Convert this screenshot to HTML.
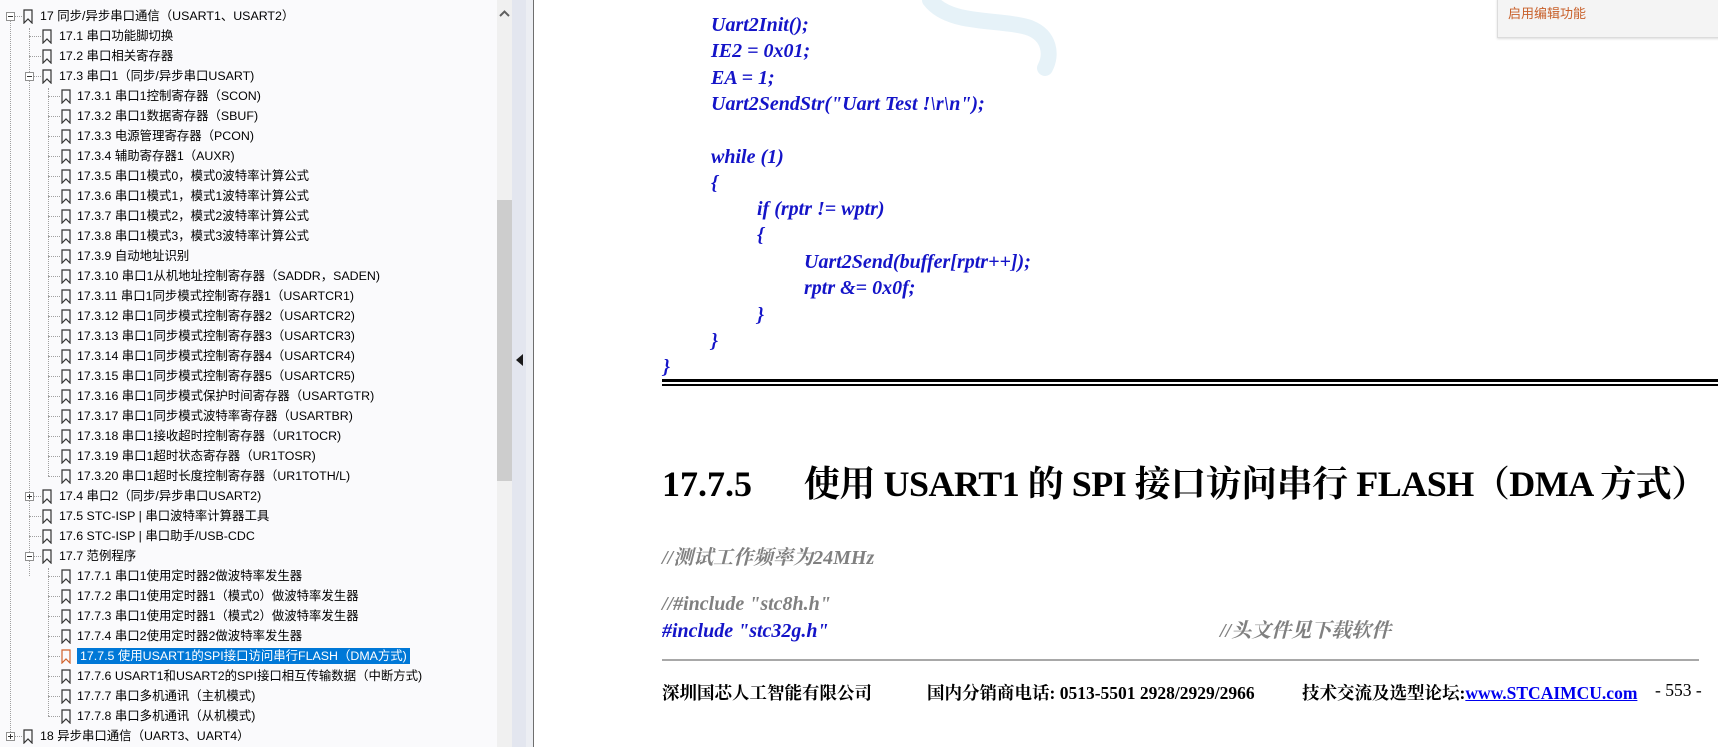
<!DOCTYPE html>
<html><head><meta charset="utf-8"><style>
*{margin:0;padding:0;box-sizing:border-box}
body{width:1718px;height:747px;overflow:hidden;background:#fff;position:relative;font-family:"Liberation Sans","Noto Sans CJK SC",sans-serif}
#left{position:absolute;left:0;top:0;width:497px;height:747px;background:#fafafc;overflow:hidden}
.r{position:absolute;height:20px;line-height:20px;font-size:12.4px;color:#000;white-space:nowrap}
.bm{position:absolute;width:10px;height:15px}
.vl{position:absolute;border-left:1px dotted #a0a0a0;width:0}
.hl{position:absolute;border-top:1px dotted #a0a0a0;height:0}
.ex{position:absolute;width:9px;height:9px;border:1px solid #919191;background:#fff}
.ex::before{content:"";position:absolute;left:1px;top:3px;width:5px;height:1px;background:#333}
.ex.p::after{content:"";position:absolute;left:3px;top:1px;width:1px;height:5px;background:#333}
.sel{background:#0078d7;color:#fff;padding:1px 3px}
#sb{position:absolute;left:497px;top:0;width:15px;height:747px;background:#f0f0f0}
#thumb{position:absolute;left:497px;top:200px;width:15px;height:281px;background:#cdcdcd}
#div{position:absolute;left:512px;top:0;width:14px;height:747px;background:#e3e6ef}
#div2{position:absolute;left:526px;top:0;width:7px;height:747px;background:#eceef3}
#div3{position:absolute;left:533px;top:0;width:1px;height:747px;background:#6e6e6e}
.code{position:absolute;font-family:"Liberation Serif","Noto Serif CJK SC",serif;font-weight:bold;font-style:italic;font-size:20px;color:#1414c8;white-space:pre;line-height:26.35px}
.cm{color:#808080}
.ft{position:absolute;top:680px;font-family:"Liberation Serif","Noto Serif CJK SC",serif;font-weight:bold;font-size:17.5px;color:#000;white-space:nowrap}
</style></head><body>
<div id="left">
<div class="vl" style="left:10px;top:21px;height:715px"></div>
<div class="vl" style="left:29px;top:28px;height:548px"></div>
<div class="vl" style="left:48px;top:88px;height:388px"></div>
<div class="vl" style="left:48px;top:568px;height:148px"></div>
</div>
<div id="sb"></div>
<svg style="position:absolute;left:499px;top:10px" width="11" height="8"><path d="M1 6 L5.5 1.5 L10 6" fill="none" stroke="#606060" stroke-width="2"/></svg>
<div id="thumb"></div>
<div id="div"></div><div id="div2"></div><div id="div3"></div>
<svg style="position:absolute;left:516px;top:354px" width="8" height="12"><path d="M7 0 L0 6 L7 12 Z" fill="#1a1a1a"/></svg>

<svg style="position:absolute;left:920px;top:0" width="140" height="80"><path d="M10 0 C30 26 80 18 110 28 C130 36 132 55 125 68" fill="none" stroke="#e6f2f8" stroke-width="16" stroke-linecap="round"/></svg>

<div style="position:absolute;left:1497px;top:-2px;width:225px;height:40px;background:#f4f4f4;border:1px solid #dcdcdc;box-shadow:0 1px 2px #ddd"></div>
<div style="position:absolute;left:1508px;top:3px;font-size:13px;color:#c8602a">启用编辑功能</div>

<div class="code" style="left:711px;top:12px">Uart2Init();
IE2 = 0x01;
EA = 1;
Uart2SendStr("Uart Test !\r\n");

while (1)
{</div>
<div class="code" style="left:757px;top:196px">if (rptr != wptr)
{</div>
<div class="code" style="left:804px;top:249px">Uart2Send(buffer[rptr++]);
rptr &amp;= 0x0f;</div>
<div class="code" style="left:757px;top:302px">}</div>
<div class="code" style="left:711px;top:328px">}</div>
<div class="code" style="left:663px;top:354px">}</div>
<div style="position:absolute;left:662px;top:379px;width:1056px;height:3px;background:#000"></div>
<div style="position:absolute;left:662px;top:384px;width:1056px;height:2px;background:#000"></div>

<div style="position:absolute;left:662px;top:462px;font-family:'Liberation Serif','Noto Serif CJK SC',serif;font-weight:bold;font-size:36px;color:#000;white-space:nowrap;line-height:44px">17.7.5</div>
<div style="position:absolute;left:804px;top:462px;font-family:'Liberation Serif','Noto Serif CJK SC',serif;font-weight:bold;font-size:36px;color:#000;white-space:nowrap;line-height:44px;letter-spacing:-0.5px">使用 USART1 的 SPI 接口访问串行 FLASH（DMA 方式）</div>

<div class="code cm" style="left:662px;top:545px">//测试工作频率为24MHz</div>
<div class="code cm" style="left:662px;top:591px">//#include "stc8h.h"</div>
<div class="code" style="left:662px;top:618px">#include "stc32g.h"</div>
<div class="code cm" style="left:1220px;top:618px">//头文件见下载软件</div>
<div style="position:absolute;left:662px;top:659px;width:1037px;height:2px;background:#a8a8a8"></div>
<div class="ft" style="left:662px">深圳国芯人工智能有限公司</div>
<div class="ft" style="left:927px">国内分销商电话: 0513-5501 2928/2929/2966</div>
<div class="ft" style="left:1302px">技术交流及选型论坛:<span style="color:#0000ee;text-decoration:underline">www.STCAIMCU.com</span></div>
<div class="ft" style="left:1655px;font-weight:normal">- 553 -</div>

<script>
var rows=[
[0,"17 同步/异步串口通信（USART1、USART2）","m"],
[1,"17.1  串口功能脚切换"],
[1,"17.2  串口相关寄存器"],
[1,"17.3  串口1（同步/异步串口USART)","m"],
[2,"17.3.1 串口1控制寄存器（SCON)"],
[2,"17.3.2  串口1数据寄存器（SBUF)"],
[2,"17.3.3 电源管理寄存器（PCON)"],
[2,"17.3.4 辅助寄存器1（AUXR)"],
[2,"17.3.5  串口1模式0，模式0波特率计算公式"],
[2,"17.3.6  串口1模式1，模式1波特率计算公式"],
[2,"17.3.7 串口1模式2，模式2波特率计算公式"],
[2,"17.3.8  串口1模式3，模式3波特率计算公式"],
[2,"17.3.9  自动地址识别"],
[2,"17.3.10 串口1从机地址控制寄存器（SADDR，SADEN)"],
[2,"17.3.11  串口1同步模式控制寄存器1（USARTCR1)"],
[2,"17.3.12  串口1同步模式控制寄存器2（USARTCR2)"],
[2,"17.3.13 串口1同步模式控制寄存器3（USARTCR3)"],
[2,"17.3.14  串口1同步模式控制寄存器4（USARTCR4)"],
[2,"17.3.15 串口1同步模式控制寄存器5（USARTCR5)"],
[2,"17.3.16  串口1同步模式保护时间寄存器（USARTGTR)"],
[2,"17.3.17 串口1同步模式波特率寄存器（USARTBR)"],
[2,"17.3.18  串口1接收超时控制寄存器（UR1TOCR)"],
[2,"17.3.19 串口1超时状态寄存器（UR1TOSR)"],
[2,"17.3.20 串口1超时长度控制寄存器（UR1TOTH/L)"],
[1,"17.4  串口2（同步/异步串口USART2)","p"],
[1,"17.5  STC-ISP | 串口波特率计算器工具"],
[1,"17.6  STC-ISP | 串口助手/USB-CDC"],
[1,"17.7  范例程序","m"],
[2,"17.7.1 串口1使用定时器2做波特率发生器"],
[2,"17.7.2 串口1使用定时器1（模式0）做波特率发生器"],
[2,"17.7.3 串口1使用定时器1（模式2）做波特率发生器"],
[2,"17.7.4 串口2使用定时器2做波特率发生器"],
[2,"17.7.5 使用USART1的SPI接口访问串行FLASH（DMA方式)","s"],
[2,"17.7.6 USART1和USART2的SPI接口相互传输数据（中断方式)"],
[2,"17.7.7  串口多机通讯（主机模式)"],
[2,"17.7.8 串口多机通讯（从机模式)"],
[0,"18  异步串口通信（UART3、UART4）","p"]];
var L=document.getElementById("left"),h="";
var ix=[23,42,61],tx=[40,59,77],lx=[10,29,48];
rows.forEach(function(r,i){
 var c=16+20*i,lv=r[0],f=r[2]||"";
 h+='<div class="hl" style="left:'+lx[lv]+'px;top:'+c+'px;width:'+(ix[lv]-lx[lv]-1)+'px"></div>';
 if(f=="m"||f=="p") h+='<div class="ex'+(f=="p"?" p":"")+'" style="left:'+(lx[lv]-4)+'px;top:'+(c-4)+'px"></div>';
 var col=f=="s"?"#d0602a":"#333";
 h+='<svg class="bm" style="left:'+ix[lv]+'px;top:'+(c-7)+'px" viewBox="0 0 10 15"><path d="M1 1 H9 V14 L5 10 L1 14 Z" fill="none" stroke="'+col+'" stroke-width="1.2"/></svg>';
 h+='<div class="r" style="left:'+tx[lv]+'px;top:'+(c-10)+'px"><span'+(f=="s"?' class="sel"':'')+'>'+r[1]+'</span></div>';
});
L.insertAdjacentHTML("beforeend",h);
</script>
</body></html>
